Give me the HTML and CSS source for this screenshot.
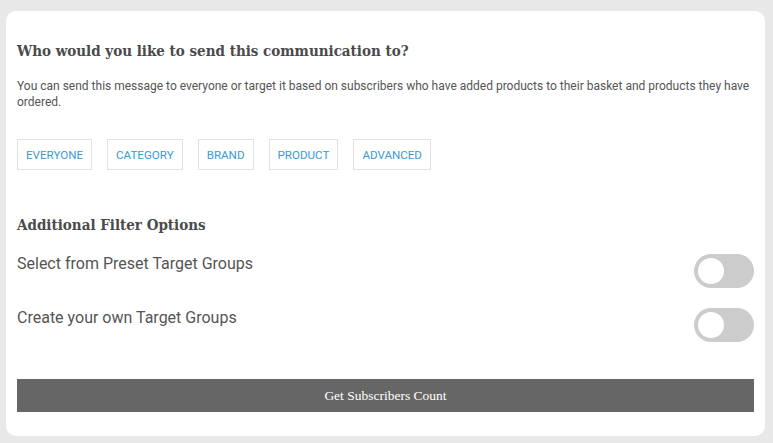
FILE: index.html
```html
<!DOCTYPE html>
<html>
<head>
    <title>Send communication</title>
    <meta name="viewport" content="width=device-width, initial-scale=1">
    <link rel="stylesheet" href="styles.css">
</head>
<body>
<div class="card">
    <h2 class="title">Who would you like to send this communication to?</h2>
    <p class="intro">You can send this message to everyone or target it based on subscribers who have added products to their basket and products they have ordered.</p>

    <div class="target-tabs">
        <button class="tab">EVERYONE</button>
        <button class="tab">CATEGORY</button>
        <button class="tab">BRAND</button>
        <button class="tab">PRODUCT</button>
        <button class="tab">ADVANCED</button>
    </div>

    <h3 class="subtitle">Additional Filter Options</h3>

    <div class="option-row">
        <span>Select from Preset Target Groups</span>
        <label class="switch"><input type="checkbox"><span class="slider"></span></label>
    </div>
    <div class="option-row">
        <span>Create your own Target Groups</span>
        <label class="switch"><input type="checkbox"><span class="slider"></span></label>
    </div>

    <button class="count-button">Get Subscribers Count</button>
</div>
</body>
</html>
```

FILE: styles.css
```css
html, body {
    margin: 0;
    background-color: #e8e8e8;
}

body {
    padding: 11px 8px 6px 6px;
    font-family: Roboto, "Liberation Sans", sans-serif;
    color: #555555;
}

.card {
    background-color: #ffffff;
    border-radius: 10px;
    padding: 30px 11px 24px 11px;
}

.title {
    font-family: "DejaVu Serif Condensed", "DejaVu Serif", serif;
    font-stretch: condensed;
    font-size: 15px;
    font-weight: bold;
    color: #4a4a4a;
    margin: 0 0 17px;
    line-height: 20px;
}

.intro {
    font-size: 12px;
    line-height: 16px;
    margin: 0;
    color: #555555;
}

.target-tabs {
    display: flex;
    gap: 15px;
    margin-top: 29px;
}

.tab {
    font-family: Roboto, "Liberation Sans", sans-serif;
    font-size: 11.6px;
    color: #3b9ad6;
    background: #ffffff;
    border: 1px solid #e2e2e2;
    height: 31px;
    padding: 0 8px;
    cursor: pointer;
}

.subtitle {
    font-family: "DejaVu Serif Condensed", "DejaVu Serif", serif;
    font-stretch: condensed;
    font-size: 15px;
    font-weight: bold;
    color: #4a4a4a;
    margin: 45px 0 19px;
    line-height: 20px;
}

.option-row {
    display: flex;
    justify-content: space-between;
    align-items: flex-start;
    font-size: 16px;
    line-height: 20px;
    color: #555555;
    height: 54px;
}

.switch {
    position: relative;
    display: inline-block;
    width: 60px;
    height: 34px;
}

.switch input {
    opacity: 0;
    width: 0;
    height: 0;
}

.slider {
    position: absolute;
    cursor: pointer;
    top: 0;
    left: 0;
    right: 0;
    bottom: 0;
    background-color: #cccccc;
    border-radius: 17px;
}

.slider:before {
    position: absolute;
    content: "";
    height: 26px;
    width: 26px;
    left: 4px;
    bottom: 4px;
    background-color: #ffffff;
    border-radius: 50%;
}

.count-button {
    display: block;
    width: 100%;
    height: 33px;
    margin-top: 17px;
    border: 0;
    background-color: #666666;
    color: #ffffff;
    font-family: "Liberation Serif", serif;
    font-size: 13.5px;
    cursor: pointer;
}
```
